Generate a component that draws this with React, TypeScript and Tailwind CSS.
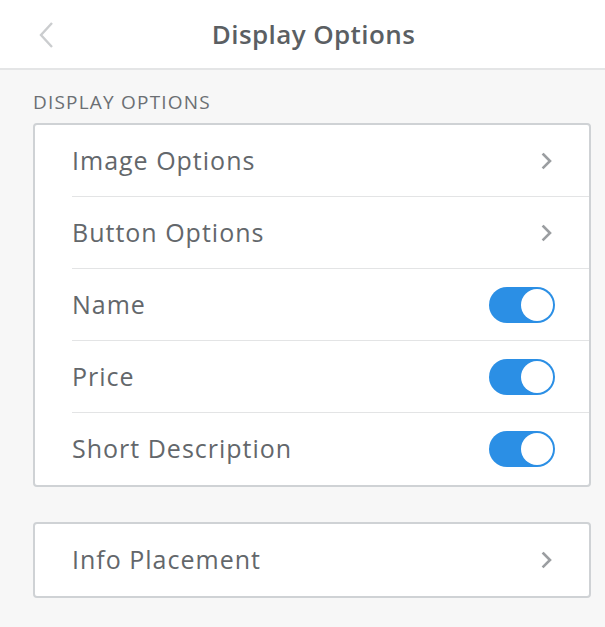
import React, { useState } from "react";

const font = { fontFamily: "'Open Sans', Lato, sans-serif" };

function Chevron() {
    return (
        <svg width="14" height="18" viewBox="0 0 14 18" fill="none">
            <path d="M4.5 2.5 L11 9 L4.5 15.5" stroke="#9b9ea1" strokeWidth="2.6" strokeLinecap="square" />
        </svg>
    );
}

function Toggle({ on, onClick }: { on: boolean; onClick: () => void }) {
    return (
        <button
            type="button"
            onClick={onClick}
            className={
                on
                    ? "w-[66px] h-[36px] rounded-full bg-[#2b8fe5] flex items-center justify-end p-[2px]"
                    : "w-[66px] h-[36px] rounded-full bg-[#d5d7d9] flex items-center justify-start p-[2px]"
            }
        >
            <span className="w-[32px] h-[32px] rounded-full bg-white block" />
        </button>
    );
}

function LinkRow({ label, last }: { label: string; last?: boolean }) {
    return (
        <div className="pl-[37px]">
            <div className={"h-[72px] flex items-center justify-between pr-[36px] " + (last ? "" : "border-b border-[#e3e4e5]")}>
                <span className="text-[25px] text-[#63676b] tracking-[1px]">{label}</span>
                <Chevron />
            </div>
        </div>
    );
}

function ToggleRow({ label, last }: { label: string; last?: boolean }) {
    const [on, setOn] = useState(true);
    return (
        <div className="pl-[37px]">
            <div className={"h-[72px] flex items-center justify-between pr-[34px] " + (last ? "" : "border-b border-[#e3e4e5]")}>
                <span className="text-[25px] text-[#63676b] tracking-[1px]">{label}</span>
                <Toggle on={on} onClick={() => setOn(!on)} />
            </div>
        </div>
    );
}

export default function App() {
    return (
        <div className="w-[605px] h-[627px] bg-[#f7f7f7] overflow-hidden" style={font}>
            <div className="h-[70px] bg-white border-b-2 border-[#e4e5e6] relative flex items-center justify-center">
                <button type="button" className="absolute left-[36px] top-[20px]">
                    <svg width="22" height="30" viewBox="0 0 22 30" fill="none">
                        <path d="M16 3 L5 15 L16 27" stroke="#cbcdcf" strokeWidth="2.4" />
                    </svg>
                </button>
                <h1 className="ml-[22px] text-[26px] font-semibold text-[#5b5f63] tracking-[0.4px]">Display Options</h1>
            </div>

            <div className="pl-[33px] pr-[14px]">
                <p className="mt-[18px] mb-[7px] text-[19px] leading-[28px] text-[#6b6f73] tracking-[1.2px]">DISPLAY OPTIONS</p>
                <div className="bg-white border-2 border-[#cfd2d5] rounded-[4px]">
                    <LinkRow label="Image Options" />
                    <LinkRow label="Button Options" />
                    <ToggleRow label="Name" />
                    <ToggleRow label="Price" />
                    <ToggleRow label="Short Description" last />
                </div>

                <div className="mt-[35px] bg-white border-2 border-[#cfd2d5] rounded-[4px]">
                    <LinkRow label="Info Placement" last />
                </div>
            </div>
        </div>
    );
}
